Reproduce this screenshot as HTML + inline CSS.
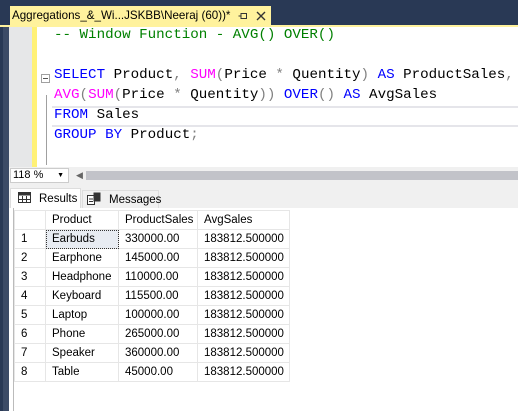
<!DOCTYPE html>
<html><head><style>
*{margin:0;padding:0;box-sizing:border-box}
body{width:518px;height:411px;overflow:hidden;background:#fff;position:relative;font-family:"Liberation Sans",sans-serif}
.abs{position:absolute}
.code{font-family:"Liberation Mono",monospace;font-size:14.2px;white-space:pre;position:absolute;left:54px;line-height:20px;color:#000}
.k{color:#0000ff}.f{color:#ff00ff}.g{color:#808080}.c{color:#008000}
table{border-collapse:collapse;font-size:11.5px;color:#000}
td{height:19px;border:1px solid #e6e6e6;padding:0 0 0 6px;white-space:nowrap}
</style></head><body>
<div class="abs" style="left:0;top:0;width:518px;height:26px;background:#293955"></div>
<div class="abs" style="left:10px;top:6px;width:261px;height:20px;background:#fff29d"></div>
<div class="abs" style="left:0;top:25px;width:518px;height:2px;background:#fff29d"></div>
<div class="abs" style="left:12px;top:9px;font-size:11.6px;color:#000;white-space:nowrap">Aggregations_&amp;_Wi...JSKBB\Neeraj (60))*</div>
<svg class="abs" style="left:238px;top:11px" width="10" height="10"><path d="M0.5 5H3M3 2V8M3 2.5H8.5V7.5H3" fill="none" stroke="#333"/></svg>
<svg class="abs" style="left:256px;top:11px" width="10" height="10"><path d="M1 1L9 9M9 1L1 9" stroke="#333" stroke-width="1.4"/></svg>
<div class="abs" style="left:0;top:27px;width:3px;height:384px;background:#293955"></div>
<div class="abs" style="left:3px;top:27px;width:6px;height:384px;background:#3c4b66"></div>
<div class="abs" style="left:9px;top:27px;width:23px;height:141px;background:#e6e7e8"></div>
<div class="abs" style="left:32px;top:27px;width:5px;height:141px;background:#fff176"></div>
<div class="abs" style="left:46px;top:95px;width:1px;height:70px;background:#a0a0a0"></div>
<div class="abs" style="left:41px;top:74px;width:9px;height:9px;border:1px solid #a0a0a0;background:#fff"></div>
<div class="abs" style="left:43px;top:78px;width:5px;height:1px;background:#555"></div>
<div class="abs" style="left:52px;top:106px;width:466px;height:21px;border-top:2px solid #e5e5ea;border-bottom:2px solid #e5e5ea"></div>
<div class="code c" style="top:25px">-- Window Function - AVG() OVER()</div>
<div class="code" style="top:65px"><span class="k">SELECT</span> Product<span class="g">,</span> <span class="f">SUM</span><span class="g">(</span>Price <span class="g">*</span> Quentity<span class="g">)</span> <span class="k">AS</span> ProductSales<span class="g">,</span></div>
<div class="code" style="top:85px"><span class="f">AVG</span><span class="g">(</span><span class="f">SUM</span><span class="g">(</span>Price <span class="g">*</span> Quentity<span class="g">))</span> <span class="k">OVER</span><span class="g">()</span> <span class="k">AS</span> AvgSales</div>
<div class="code" style="top:105px"><span class="k">FROM</span> Sales</div>
<div class="code" style="top:125px"><span class="k">GROUP BY</span> Product<span class="g">;</span></div>
<div class="abs" style="left:9px;top:167px;width:509px;height:17px;background:#f0f0f0"></div>
<div class="abs" style="left:10px;top:168px;width:59px;height:15px;background:#fff;border:1px solid #ccc;font-size:11px;padding-left:2px;line-height:13px">118 %<span style="position:absolute;right:4px;top:0;font-size:7px">▼</span></div>
<div class="abs" style="left:76px;top:170px;font-size:9px;color:#666">◀</div>
<div class="abs" style="left:86px;top:171px;width:432px;height:9px;background:#c2c3c9"></div>
<div class="abs" style="left:9px;top:184px;width:509px;height:24px;background:#f0f0f0"></div>
<div class="abs" style="left:10px;top:188px;width:71px;height:21px;background:#fff;border:1px solid #ddd;border-bottom:none;font-size:11.5px;line-height:20px;padding-left:28px">Results</div>
<svg class="abs" style="left:18px;top:192px" width="14" height="12"><rect x="0.5" y="0.5" width="12" height="10" fill="none" stroke="#333"/><rect x="0.5" y="0.5" width="12" height="3" fill="#333"/><path d="M4.5 4V11M8.5 4V11M1 7.5H12" stroke="#333"/></svg>
<div class="abs" style="left:82px;top:190px;width:77px;height:18px;background:#f0f0f0;border:1px solid #ddd;border-bottom:none;font-size:11.5px;line-height:18px;padding-left:26px">Messages</div>
<svg class="abs" style="left:87px;top:192px" width="14" height="13"><rect x="0.5" y="3.5" width="7" height="9" fill="#fff" stroke="#333"/><rect x="6.5" y="0.5" width="7" height="9" fill="#333"/><path d="M2 7h4M2 9.5h4" stroke="#333"/></svg>
<div class="abs" style="left:9px;top:208px;width:509px;height:203px;background:#fff"></div>
<div class="abs" style="left:13px;top:208px;width:1px;height:203px;background:#bbb"></div>
<table class="abs" style="left:14px;top:210px">
<tr><td style="width:31px"></td><td style="width:73px">Product</td><td style="width:79px">ProductSales</td><td style="width:92px">AvgSales</td></tr>
<tr><td>1</td><td style="background:#e8ecf2;outline:1px dotted #333;outline-offset:-1px">Earbuds</td><td>330000.00</td><td>183812.500000</td></tr>
<tr><td>2</td><td>Earphone</td><td>145000.00</td><td>183812.500000</td></tr>
<tr><td>3</td><td>Headphone</td><td>110000.00</td><td>183812.500000</td></tr>
<tr><td>4</td><td>Keyboard</td><td>115500.00</td><td>183812.500000</td></tr>
<tr><td>5</td><td>Laptop</td><td>100000.00</td><td>183812.500000</td></tr>
<tr><td>6</td><td>Phone</td><td>265000.00</td><td>183812.500000</td></tr>
<tr><td>7</td><td>Speaker</td><td>360000.00</td><td>183812.500000</td></tr>
<tr><td>8</td><td>Table</td><td>45000.00</td><td>183812.500000</td></tr>
</table>
</body></html>
